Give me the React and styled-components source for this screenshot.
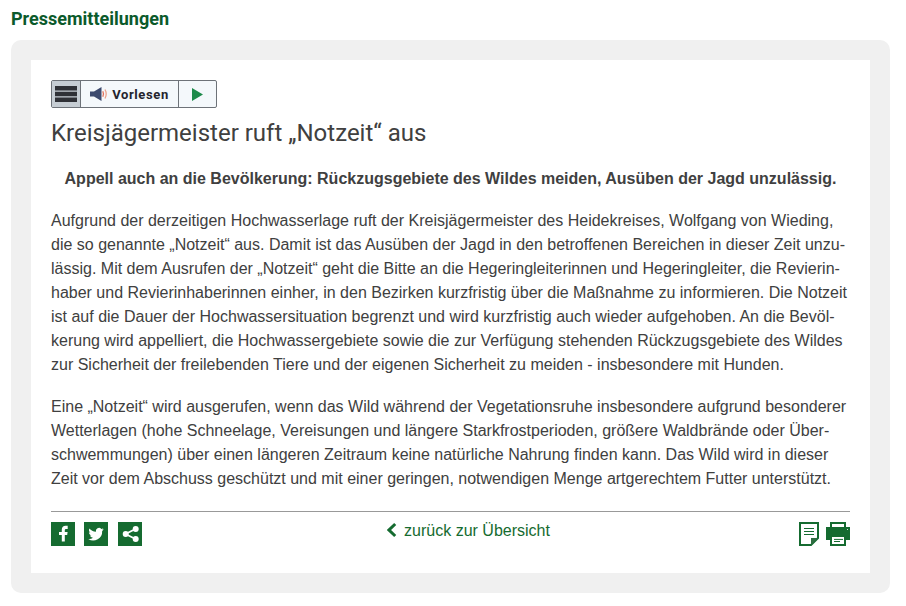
import React from "react";
import styled, { createGlobalStyle } from "styled-components";

const Global = createGlobalStyle`
  html, body { margin: 0; padding: 0; background: #fff; }
  body { font-family: "Liberation Sans", Arial, sans-serif; color: #404040; }
`;

const Page = styled.div`
  width: 906px;
  height: 606px;
  padding: 8px 16px 13px 11px;
  box-sizing: border-box;
  overflow: hidden;
`;
const Heading = styled.h2`
  margin: 0 0 10px;
  font: 700 18px/22px Roboto, sans-serif;
  color: #0b5a2b;
`;
const Outer = styled.div`
  background: #f0f0f0;
  border-radius: 10px;
  padding: 20px;
`;
const Card = styled.div`
  background: #fff;
  height: 513px;
  box-sizing: border-box;
  padding: 20px;
`;
const Player = styled.div`
  display: inline-flex;
  height: 28px;
  box-sizing: border-box;
  border: 1px solid #6d7278;
  border-radius: 2px;
  background: #f4f8fb;
  vertical-align: top;
`;
const PlayerCell = styled.div`
  display: flex;
  align-items: center;
  justify-content: center;
  width: ${(p) => p.$w}px;
  background: ${(p) => p.$bg || "transparent"};
  & + & { border-left: 1px solid #6d7278; }
`;
const PlayerLabel = styled.span`
  font: 700 13px/1 Roboto, sans-serif;
  letter-spacing: 0.6px;
  color: #24242e;
  margin-left: 5px;
`;
const Title = styled.h1`
  margin: 10px 0 0;
  font: 400 24px/30px Roboto, sans-serif;
  color: #404040;
`;
const Lead = styled.p`
  margin: 19px 0 0;
  font-size: 16px;
  line-height: 24px;
  font-weight: 700;
  text-align: center;
`;
const Para = styled.p`
  margin: 18px 0 0;
  font-size: 16px;
  line-height: 24px;
  white-space: nowrap;
`;
const Footer = styled.div`
  margin-top: 20px;
  border-top: 1px solid #999;
  padding-top: 10px;
  display: grid;
  grid-template-columns: 1fr auto 1fr;
`;
const Socials = styled.div`
  display: flex;
  gap: 9px;
`;
const Square = styled.div`
  width: 24px;
  height: 24px;
  background: #156b30;
  display: flex;
  align-items: center;
  justify-content: center;
  &:last-child { margin-left: 1px; }
`;
const BackLink = styled.a`
  display: flex;
  align-items: flex-start;
  gap: 7px;
  margin-left: 36px;
  font-size: 16px;
  line-height: 18px;
  color: #156b30;
`;
const Tools = styled.div`
  display: flex;
  justify-content: flex-end;
  gap: 7px;
`;

const lines1 = [
  "Aufgrund der derzeitigen Hochwasserlage ruft der Kreisjägermeister des Heidekreises, Wolfgang von Wieding,",
  "die so genannte „Notzeit“ aus. Damit ist das Ausüben der Jagd in den betroffenen Bereichen in dieser Zeit unzu-",
  "lässig. Mit dem Ausrufen der „Notzeit“ geht die Bitte an die Hegeringleiterinnen und Hegeringleiter, die Revierin-",
  "haber und Revierinhaberinnen einher, in den Bezirken kurzfristig über die Maßnahme zu informieren. Die Notzeit",
  "ist auf die Dauer der Hochwassersituation begrenzt und wird kurzfristig auch wieder aufgehoben. An die Bevöl-",
  "kerung wird appelliert, die Hochwassergebiete sowie die zur Verfügung stehenden Rückzugsgebiete des Wildes",
  "zur Sicherheit der freilebenden Tiere und der eigenen Sicherheit zu meiden - insbesondere mit Hunden.",
];
const lines2 = [
  "Eine „Notzeit“ wird ausgerufen, wenn das Wild während der Vegetationsruhe insbesondere aufgrund besonderer",
  "Wetterlagen (hohe Schneelage, Vereisungen und längere Starkfrostperioden, größere Waldbrände oder Über-",
  "schwemmungen) über einen längeren Zeitraum keine natürliche Nahrung finden kann. Das Wild wird in dieser",
  "Zeit vor dem Abschuss geschützt und mit einer geringen, notwendigen Menge artgerechtem Futter unterstützt.",
];

const withBreaks = (lines) =>
  lines.map((l, i) => (
    <React.Fragment key={i}>
      {l}
      {i < lines.length - 1 && <br />}
    </React.Fragment>
  ));

const MenuIcon = () => (
  <svg width="22" height="16" viewBox="0 0 22 16">
    <path d="M0 0h22v4.600H0zM0 5.700h22v4.600H0zM0 11.400h22V16H0z" fill="#2f3136" />
  </svg>
);
const SpeakerIcon = () => (
  <svg width="17" height="14" viewBox="0 0 17 14">
    <path d="M0 4.500h4L11.500 0v14L4 9.500H0z" fill="#3c4a6e" />
    <path d="M12.800 4.200c.9 1.800.9 3.800 0 5.600" stroke="#e0705a" strokeWidth="1.300" fill="none" />
    <path d="M15 2.500c1.600 3 1.600 6 0 9" stroke="#eba28c" strokeWidth="1.300" fill="none" />
  </svg>
);
const PlayIcon = () => (
  <svg width="11" height="13" viewBox="0 0 11 13">
    <path d="M0 0l11 6.500L0 13z" fill="#1d8a4a" />
  </svg>
);
const Facebook = () => (
  <svg width="24" height="24" viewBox="0 0 24 24">
    <path d="M13.800 19.500V13h2.400l.4-2.900h-2.800V8.300c0-.8.300-1.400 1.400-1.400h1.500V3.800c-.4 0-1.200-.1-2.100-.1-2.300 0-3.800 1.400-3.800 3.900v2.500H8v2.900h2.800v6.500z" fill="#fff" />
  </svg>
);
const Twitter = () => (
  <svg width="24" height="24" viewBox="-2 -2 28 28">
    <path d="M21 6.600c-.7.300-1.400.5-2.100.6.800-.5 1.300-1.200 1.600-2-.7.400-1.500.7-2.300.9a3.700 3.700 0 0 0-6.300 3.400C8.800 9.300 6.100 7.900 4.300 5.600c-1 1.700-.5 3.800 1.100 4.900-.6 0-1.200-.2-1.700-.5 0 1.800 1.300 3.300 3 3.700-.5.100-1.100.2-1.700.1.500 1.500 1.900 2.500 3.500 2.600A7.500 7.500 0 0 1 3 17.900 10.500 10.500 0 0 0 19.200 8.500c.7-.5 1.300-1.100 1.800-1.900z" fill="#fff" />
  </svg>
);
const Share = () => (
  <svg width="24" height="24" viewBox="0 0 24 24">
    <path d="M17.500 7L7.500 12l10 5" stroke="#fff" strokeWidth="1.800" fill="none" />
    <circle cx="17.700" cy="7" r="3" fill="#fff" />
    <circle cx="7.700" cy="12" r="3" fill="#fff" />
    <circle cx="17.700" cy="17" r="3" fill="#fff" />
  </svg>
);
const Chevron = () => (
  <svg width="10" height="16" viewBox="0 0 10 16">
    <path d="M8.200 2L2 8l6.200 6" stroke="#156b30" strokeWidth="3" fill="none" />
  </svg>
);
const NoteIcon = () => (
  <svg width="20" height="24" viewBox="0 0 20 24">
    <path d="M1 1h18v15l-7 7H1z" fill="#fff" stroke="#156b30" strokeWidth="2" />
    <path d="M5 6.500h10M5 9.500h10M5 12.500h10" stroke="#156b30" strokeWidth="1.200" />
    <path d="M12 23v-7h7z" fill="#2f6d42" />
  </svg>
);
const PrintIcon = () => (
  <svg width="24" height="24" viewBox="0 0 24 24">
    <path d="M4 0h16v5h4v13h-4v6H4v-6H0V5h4z" fill="#156b30" />
    <path d="M6 2h12v3H6zM6 15h12v7H6z" fill="#fff" />
    <path d="M8 17.400h9M8 19.500h6" stroke="#156b30" strokeWidth="1" />
    <path d="M21 7h1v1h-1z" fill="#cfe0d4" />
  </svg>
);

export default function App() {
  return (
    <Page>
      <Global />
      <Heading>Pressemitteilungen</Heading>
      <Outer>
        <Card>
          <Player>
            <PlayerCell $w={28} $bg="#c6cdd3">
              <MenuIcon />
            </PlayerCell>
            <PlayerCell $w={97}>
              <SpeakerIcon />
              <PlayerLabel>Vorlesen</PlayerLabel>
            </PlayerCell>
            <PlayerCell $w={37}>
              <PlayIcon />
            </PlayerCell>
          </Player>
          <Title>Kreisjägermeister ruft „Notzeit“ aus</Title>
          <Lead>Appell auch an die Bevölkerung: Rückzugsgebiete des Wildes meiden, Ausüben der Jagd unzulässig.</Lead>
          <Para>{withBreaks(lines1)}</Para>
          <Para>{withBreaks(lines2)}</Para>
          <Footer>
            <Socials>
              <Square><Facebook /></Square>
              <Square><Twitter /></Square>
              <Square><Share /></Square>
            </Socials>
            <BackLink>
              <Chevron />
              zurück zur Übersicht
            </BackLink>
            <Tools>
              <NoteIcon />
              <PrintIcon />
            </Tools>
          </Footer>
        </Card>
      </Outer>
    </Page>
  );
}
